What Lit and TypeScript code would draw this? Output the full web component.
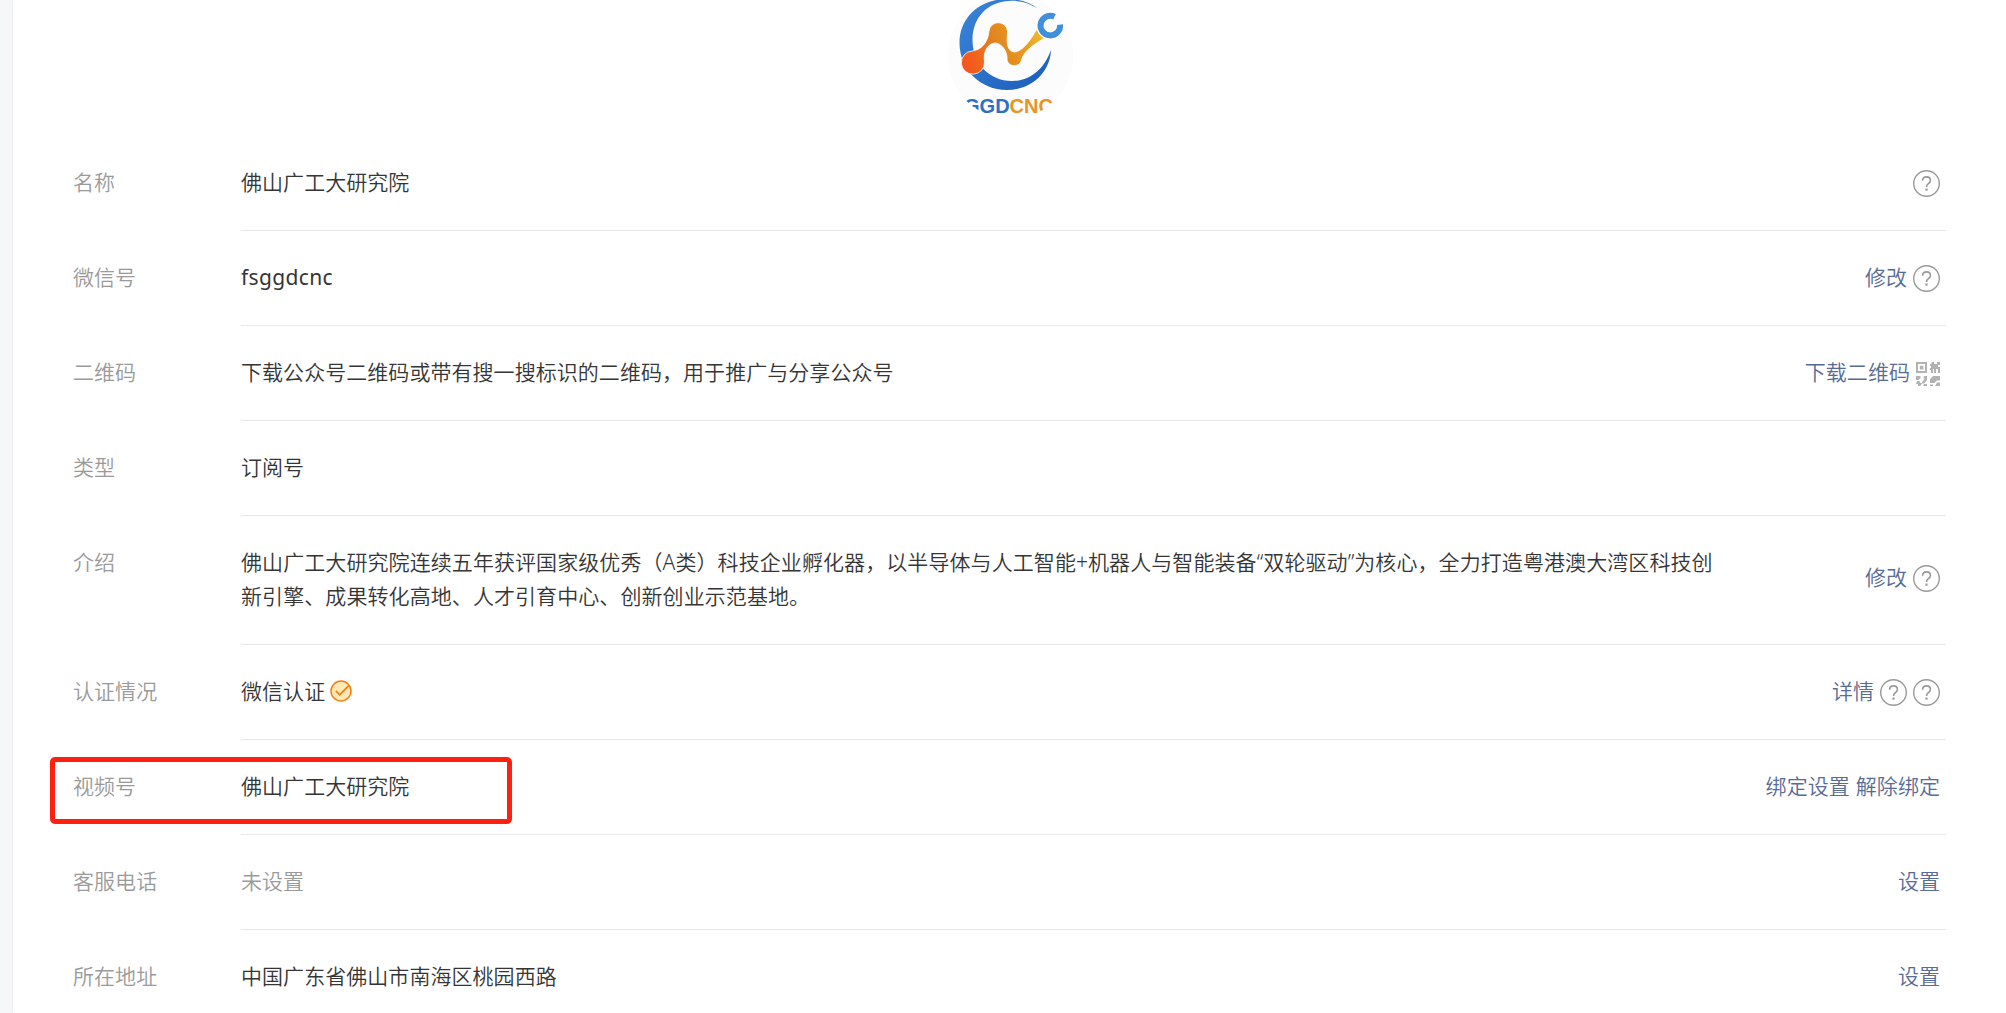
import { LitElement, html, css, nothing } from "lit";
import { customElement, property } from "lit/decorators.js";

type Action = { text?: string; icon?: "help" | "qr" };
type Row = { label: string; value: string; muted?: boolean; verified?: boolean; tall?: boolean; marked?: boolean; latin?: boolean; actions: Action[] };

const HELP: Action = { icon: "help" };

const ROWS: Row[] = [
  { label: "名称", value: "佛山广工大研究院", actions: [HELP] },
  { label: "微信号", value: "fsggdcnc", latin: true, actions: [{ text: "修改" }, HELP] },
  { label: "二维码", value: "下载公众号二维码或带有搜一搜标识的二维码，用于推广与分享公众号", actions: [{ text: "下载二维码" }, { icon: "qr" }] },
  { label: "类型", value: "订阅号", actions: [] },
  {
    label: "介绍",
    value: "佛山广工大研究院连续五年获评国家级优秀（A类）科技企业孵化器，以半导体与人工智能+机器人与智能装备“双轮驱动”为核心，全力打造粤港澳大湾区科技创新引擎、成果转化高地、人才引育中心、创新创业示范基地。",
    tall: true,
    actions: [{ text: "修改" }, HELP],
  },
  { label: "认证情况", value: "微信认证", verified: true, actions: [{ text: "详情" }, HELP, HELP] },
  { label: "视频号", value: "佛山广工大研究院", marked: true, actions: [{ text: "绑定设置" }, { text: "解除绑定" }] },
  { label: "客服电话", value: "未设置", muted: true, actions: [{ text: "设置" }] },
  { label: "所在地址", value: "中国广东省佛山市南海区桃园西路", actions: [{ text: "设置" }] },
];

const helpIcon = html`<svg class="help" viewBox="0 0 27 27" width="27" height="27" fill="none" stroke="#9a9a9a">
  <circle cx="13.5" cy="13.5" r="12.8" stroke-width="1.4" />
  <path d="M9.6 10.7c0-2.3 1.6-3.8 3.9-3.8s3.9 1.4 3.9 3.5c0 1.5-.8 2.3-2 3.2-1.3 1-1.9 1.7-1.9 3.3" stroke-width="1.6" />
  <path d="M12.4 19.6h2.2" stroke-width="2.2" />
</svg>`;

const qrIcon = html`<svg class="qr" viewBox="0 0 24 24" width="24" height="24" fill="#b2b2b2">
  <path fill-rule="evenodd" d="M0 0h11v11H0zM2 2v7h7V2zM3.8 3.8h3.6v3.6H3.8z" />
  <path d="M16 0h2v2h3V0h3v3h-2v2h2v6h-2V7h-2v4h-2V7h-1v4h-2V8h-1V6h1V4h-1V2h1z" />
  <path d="M0 14h4.5v2L2.5 18H0zM8 14h3v4L8 21.5H6V20l3-3.5H7.500zM1 19h2.500l1 2H6l-1.500 3H2v-2H0zM8 22h3v2H7z" />
  <path d="M17 14h7v4.500h-3L18.500 21H14v-4zM14 22.500h3V24h-3zM21 20.500h3V24h-5z" />
</svg>`;

const checkIcon = html`<svg class="check" viewBox="0 0 22 22" width="22" height="22" fill="none">
  <circle cx="11" cy="11" r="10" fill="#ffe9b4" stroke="#fa7d12" stroke-width="1.5" />
  <path d="M5.8 10.900l3.900 3.900 8.800-9" stroke="#fa7d12" stroke-width="1.800" />
</svg>`;

@customElement("account-logo")
class AccountLogo extends LitElement {
  static styles = css`
    :host { display: block; width: 126px; height: 126px; }
    svg { display: block; }
    .word { font: bold 20px "Liberation Sans", Arial, sans-serif; }
  `;
  render() {
    return html`<svg viewBox="0 0 126 126" width="126" height="126">
      <defs>
        <clipPath id="round"><circle cx="63.500" cy="56" r="63" /></clipPath>
        <linearGradient id="ring" x1="0" y1="0" x2="1" y2="1">
          <stop offset="0" stop-color="#3c86d8" /><stop offset="1" stop-color="#1a5cba" />
        </linearGradient>
        <linearGradient id="link" gradientUnits="userSpaceOnUse" x1="20" y1="62" x2="98" y2="32">
          <stop offset="0" stop-color="#f4571c" /><stop offset=".15" stop-color="#f0661d" /><stop offset=".4" stop-color="#e2851e" />
          <stop offset=".7" stop-color="#e89a22" /><stop offset="1" stop-color="#f0c02c" />
        </linearGradient>
      </defs>
      <g clip-path="url(#round)">
        <circle cx="63.500" cy="56" r="63" fill="#fdfcfd" />
        <path fill="url(#ring)" d="M91 9C83 2 72-1 60-1C32-1 12.500 18 12.500 43C12.500 69 33 90 60 90C84 90 103 73 104 50C97 70 82 81 65 81C42 81 25.500 63 25.500 40C25.500 17 41 2 62 1C74 0 84 4 91 9Z" />
        <path fill="url(#link)" stroke="#fff" stroke-width=".8" d="M25 51C34 50 41 43 42 31A9.300 9.300 0 0 1 60.500 31C60.500 39 58 50 67 52C76 52 85 38 91 27L100 36.500C88 44 77 50 74.500 60A7.500 7.500 0 0 1 60 60C61 51 54 43 48 43C40 44 36 52 37.500 62A11.600 11.600 0 1 1 25 51Z" />
        <path d="M107.500 16.700A9.800 9.800 0 1 0 112.800 24.600" fill="none" stroke="#fff" stroke-width="8.400" />
        <path d="M107.500 16.700A9.800 9.800 0 1 0 113.100 24.600" fill="none" stroke="#3f8fdb" stroke-width="6" />
        <text class="word" x="17" y="113" textLength="89" lengthAdjust="spacingAndGlyphs" fill="#2f6fc2">GGD<tspan fill="#e8941f">CNC</tspan></text>
      </g>
    </svg>`;
  }
}

@customElement("info-row")
class InfoRow extends LitElement {
  @property({ attribute: false }) row!: Row;

  static styles = css`
    :host { display: flex; position: relative; line-height: 34px; letter-spacing: 0.05px; }
    .label { width: 168px; flex: none; padding-top: 29px; color: #9a9a9a; }
    .body { flex: 1; display: flex; align-items: center; justify-content: space-between; height: 94px; border-bottom: 1px solid #e4e8eb; }
    .body.tall { height: 128px; }
    .value { display: flex; align-items: center; max-width: 1476px; color: #353535; margin-top: -3px; }
    .tall .value { letter-spacing: 0.08px; }
    .value.latin { letter-spacing: 0.35px; font-weight: 400; }
    .value.muted { color: #9a9a9a; }
    .actions { display: flex; align-items: center; gap: 6px; padding-right: 6px; margin-top: -3px; color: #576b95; white-space: nowrap; }
    .tall .actions { margin-top: -7px; }
    svg { display: block; flex: none; }
    .help { margin-top: 3px; }
    .qr { margin-top: 4px; }
    .check { margin-left: 5px; }
    .mark { position: absolute; left: -23px; top: 17px; width: 452px; height: 57px; border: 5px solid #ff2012; border-radius: 5px; }
  `;

  render() {
    const r = this.row;
    return html`
      <div class="label">${r.label}</div>
      <div class="body ${r.tall ? "tall" : ""}">
        <div class="value ${r.muted ? "muted" : ""} ${r.latin ? "latin" : ""}"><span>${r.value}</span>${r.verified ? checkIcon : nothing}</div>
        <div class="actions">
          ${r.actions.map((a) => (a.icon === "help" ? helpIcon : a.icon === "qr" ? qrIcon : html`<span>${a.text}</span>`))}
        </div>
      </div>
      ${r.marked ? html`<div class="mark"></div>` : nothing}
    `;
  }
}

@customElement("app-root")
class AppRoot extends LitElement {
  static styles = css`
    :host { display: block; height: 1013px; overflow: hidden; background: #f6f7f9; font: 350 21px "Noto Sans", "Noto Sans CJK SC", sans-serif; }
    .panel { box-sizing: border-box; height: 1013px; margin-left: 13px; padding: 0 60px; background: #fff; overflow: hidden; box-shadow: 0 0 4px #e8e9eb; }
    .head { height: 136px; display: flex; padding-left: 874px; }
  `;
  render() {
    return html`<div class="panel">
      <div class="head"><account-logo></account-logo></div>
      ${ROWS.map((row) => html`<info-row .row=${row}></info-row>`)}
    </div>`;
  }
}
